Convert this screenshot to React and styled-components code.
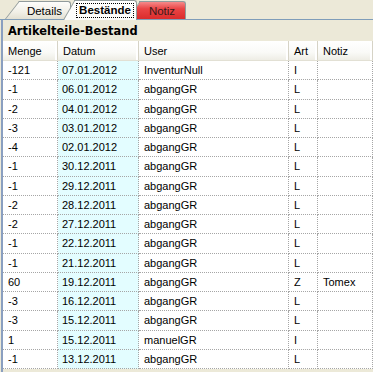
import React from 'react';
import styled, { createGlobalStyle } from 'styled-components';

const GlobalStyle = createGlobalStyle`
  html, body {
    margin: 0;
    padding: 0;
    background: #ECE9D8;
  }
  body {
    font-family: "Liberation Sans", Arial, sans-serif;
    font-size: 11px;
    color: #000;
    overflow: hidden;
  }
`;

const Window = styled.div`
  width: 373px;
  height: 372px;
  overflow: hidden;
  display: flex;
  flex-direction: column;
`;

const TabStrip = styled.div`
  height: 20px;
  box-sizing: border-box;
  display: flex;
  align-items: flex-end;
  border-bottom: 1px solid #7F9DB9;
`;

const tabFill = {
  normal: 'linear-gradient(#FDFDFB, #F1EFE6 60%, #E3E0D2)',
  active: 'linear-gradient(#FFFFFF, #FBFBF8)',
  red: 'linear-gradient(#F58A8A, #EA4545 40%, #DB2C2C)',
};

/* a tab with a slanted left edge, drawn by a skewed pseudo element */
const Tab = styled.div`
  position: relative;
  z-index: ${p => p.$z};
  box-sizing: border-box;
  width: ${p => p.$w}px;
  margin-left: ${p => p.$ml}px;
  height: ${p => (p.$active ? 20 : 18)}px;
  margin-bottom: ${p => (p.$active ? -1 : 0)}px;
  padding-top: ${p => (p.$active ? 0 : 1)}px;
  background: ${p => tabFill[p.$kind]};
  border-top: 1px solid #919B9C;
  border-right: 1px solid #919B9C;
  border-top-right-radius: 3px;
  display: flex;
  align-items: center;
  justify-content: center;
  font-size: ${p => (p.$active ? 11.5 : 11.5)}px;
  font-weight: ${p => (p.$active ? 700 : 400)};
  color: ${p => (p.$kind === 'red' ? '#3a1a1a' : '#000')};

  &::before {
    content: '';
    position: absolute;
    z-index: -1;
    top: -1px;
    bottom: 0;
    left: ${p => -p.$slant}px;
    width: ${p => p.$slant + 4}px;
    background: ${p => tabFill[p.$kind]};
    border-left: 1px solid #919B9C;
    border-top: 1px solid #919B9C;
    transform-origin: bottom left;
    transform: skewX(${p => -p.$angle}deg);
  }
`;

const FocusLabel = styled.span`
  padding: 0 2px;
  line-height: 13px;
  border: 1px dotted #000;
`;

const Panel = styled.div`
  flex: 1;
  margin-left: 1px;
  border-left: 2px solid #8A9FC0;
  display: flex;
  flex-direction: column;
`;

const Title = styled.div`
  height: 21px;
  display: flex;
  align-items: center;
  padding-left: 5px;
  font-family: "DejaVu Sans", Verdana, sans-serif;
  font-weight: 700;
  font-size: 11.4px;
  letter-spacing: 0.05px;
`;

const COLS = '55px 81px 150px 29px 1fr';

const HeaderRow = styled.div`
  display: grid;
  grid-template-columns: ${COLS};
  height: 20px;
  background: linear-gradient(#FFFFFF, #FAFAF7 60%, #EEEDE5);
  border-bottom: 1px solid #E2E0D4;
  box-sizing: border-box;
`;

const HeaderCell = styled.div`
  display: flex;
  align-items: center;
  padding-left: 5px;
  border-right: 1px solid #D6D3C6;
  box-shadow: inset -2px 0 0 #FFFFFF;
  white-space: nowrap;
  overflow: hidden;
`;

const Row = styled.div`
  display: grid;
  grid-template-columns: ${COLS};
  height: 19.25px;
  background: #FFFFFF;
`;

const Cell = styled.div`
  display: flex;
  align-items: center;
  padding-left: ${p => (p.$pad ? p.$pad : 5)}px;
  box-sizing: border-box;
  border-right: 1px dotted #A6A6A6;
  border-bottom: 1px dotted #A6A6A6;
  background: ${p => (p.$tint ? '#E3FDFF' : '#FFFFFF')};
  white-space: nowrap;
  overflow: hidden;
`;

const rows = [
  ['-121', '07.01.2012', 'InventurNull', 'I', ''],
  ['-1', '06.01.2012', 'abgangGR', 'L', ''],
  ['-2', '04.01.2012', 'abgangGR', 'L', ''],
  ['-3', '03.01.2012', 'abgangGR', 'L', ''],
  ['-4', '02.01.2012', 'abgangGR', 'L', ''],
  ['-1', '30.12.2011', 'abgangGR', 'L', ''],
  ['-1', '29.12.2011', 'abgangGR', 'L', ''],
  ['-2', '28.12.2011', 'abgangGR', 'L', ''],
  ['-2', '27.12.2011', 'abgangGR', 'L', ''],
  ['-1', '22.12.2011', 'abgangGR', 'L', ''],
  ['-1', '21.12.2011', 'abgangGR', 'L', ''],
  ['60', '19.12.2011', 'abgangGR', 'Z', 'Tomex'],
  ['-3', '16.12.2011', 'abgangGR', 'L', ''],
  ['-3', '15.12.2011', 'abgangGR', 'L', ''],
  ['1', '15.12.2011', 'manuelGR', 'I', ''],
  ['-1', '13.12.2011', 'abgangGR', 'L', ''],
];

const App = () => (
  <Window>
    <GlobalStyle />
    <TabStrip>
      <Tab $kind="normal" $w={52} $ml={19} $slant={14} $angle={38} $z={1}>
        Details
      </Tab>
      <Tab $kind="active" $active $w={63} $ml={3} $slant={11} $angle={30} $z={3}>
        <FocusLabel>Bestände</FocusLabel>
      </Tab>
      <Tab $kind="red" $w={47} $ml={2} $slant={12} $angle={36} $z={2}>
        Notiz
      </Tab>
    </TabStrip>
    <Panel>
      <Title>Artikelteile-Bestand</Title>
      <HeaderRow>
        <HeaderCell>Menge</HeaderCell>
        <HeaderCell>Datum</HeaderCell>
        <HeaderCell>User</HeaderCell>
        <HeaderCell>Art</HeaderCell>
        <HeaderCell>Notiz</HeaderCell>
      </HeaderRow>
      {rows.map((r, i) => (
        <Row key={i}>
          <Cell>{r[0]}</Cell>
          <Cell $tint $pad={4}>{r[1]}</Cell>
          <Cell>{r[2]}</Cell>
          <Cell>{r[3]}</Cell>
          <Cell>{r[4]}</Cell>
        </Row>
      ))}
    </Panel>
  </Window>
);

export default App;
